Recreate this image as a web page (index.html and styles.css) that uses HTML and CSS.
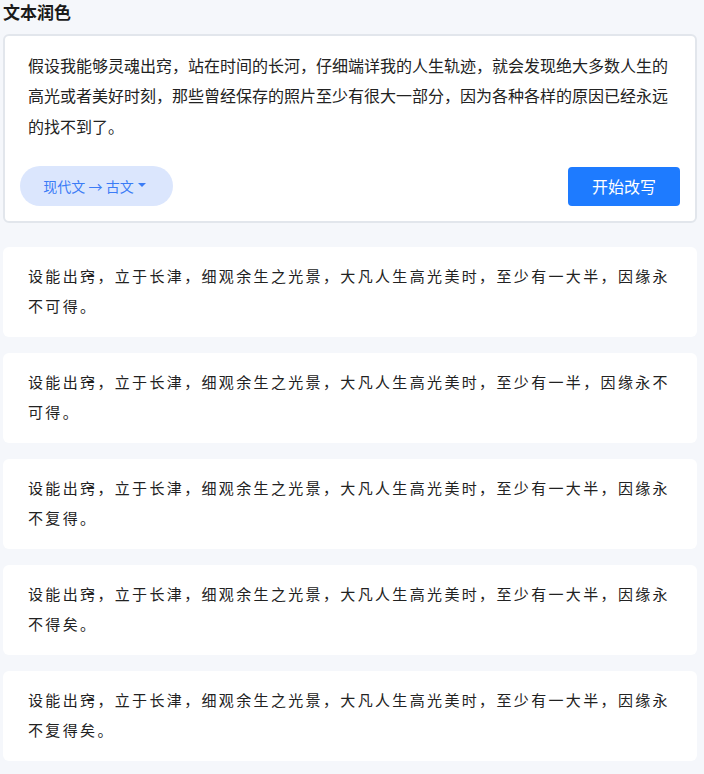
FILE: index.html
```html
<!DOCTYPE html>
<html>
<head>
    <meta charset="utf-8">
    <link rel="stylesheet" href="styles.css">
</head>
<body>
    <div class="polish-page">
        <h2 class="page-title">文本润色</h2>

        <div class="input-card">
            <p class="source-text">假设我能够灵魂出窍，站在时间的长河，仔细端详我的人生轨迹，就会发现绝大多数人生的高光或者美好时刻，那些曾经保存的照片至少有很大一部分，因为各种各样的原因已经永远的找不到了。</p>
            <div class="card-footer">
                <button class="mode-select">现代文 → 古文<span class="caret"></span></button>
                <button class="btn-primary">开始改写</button>
            </div>
        </div>

        <div class="result-list">
            <div class="result-item">设能出窍，立于长津，细观余生之光景，大凡人生高光美时，至少有一大半，因缘永不可得。</div>
            <div class="result-item">设能出窍，立于长津，细观余生之光景，大凡人生高光美时，至少有一半，因缘永不可得。</div>
            <div class="result-item">设能出窍，立于长津，细观余生之光景，大凡人生高光美时，至少有一大半，因缘永不复得。</div>
            <div class="result-item">设能出窍，立于长津，细观余生之光景，大凡人生高光美时，至少有一大半，因缘永不得矣。</div>
            <div class="result-item">设能出窍，立于长津，细观余生之光景，大凡人生高光美时，至少有一大半，因缘永不复得矣。</div>
        </div>
    </div>
</body>
</html>
```

FILE: styles.css
```css
body {
    margin: 0;
    background-color: #f5f7fb;
    font-family: "Liberation Sans", "Noto Sans CJK SC", sans-serif;
    color: #1f2329;
}
.polish-page {
    width: 694px;
    margin-left: 3px;
}
.page-title {
    margin: 0 0 6px;
    font-size: 17px;
    line-height: 28px;
    font-weight: bold;
    color: #1a1a1a;
}
.input-card {
    background: white;
    border: 2px solid #e2e6ec;
    border-radius: 6px;
    padding: 16px 15px 15px;
}
.source-text {
    margin: 0 8px;
    font-size: 16px;
    line-height: 30.4px;
    color: #222;
}
.card-footer {
    display: flex;
    justify-content: space-between;
    align-items: center;
    margin-top: 23px;
}
.mode-select {
    height: 40px;
    width: 153px;
    border: none;
    border-radius: 20px;
    background: #dbe6fd;
    color: #3b7cf6;
    font-family: "Noto Sans CJK SC", sans-serif;
    font-size: 14px;
    display: flex;
    align-items: center;
    justify-content: center;
    gap: 4px;
    padding: 0 4px 0 0;
}
.caret {
    display: inline-block;
    width: 0;
    height: 0;
    border-left: 4px solid transparent;
    border-right: 4px solid transparent;
    border-top: 4px solid #3b7cf6;
    margin-bottom: 3px;
}
.btn-primary {
    width: 112px;
    height: 39px;
    border: none;
    border-radius: 4px;
    background: #1e7bff;
    color: white;
    font-family: inherit;
    font-size: 16px;
}
.result-list {
    margin-top: 24px;
    display: flex;
    flex-direction: column;
    gap: 16px;
}
.result-item {
    background: white;
    border-radius: 6px;
    padding: 15px 25px;
    font-size: 15px;
    line-height: 30px;
    letter-spacing: 2.35px;
    color: #222;
}
```
